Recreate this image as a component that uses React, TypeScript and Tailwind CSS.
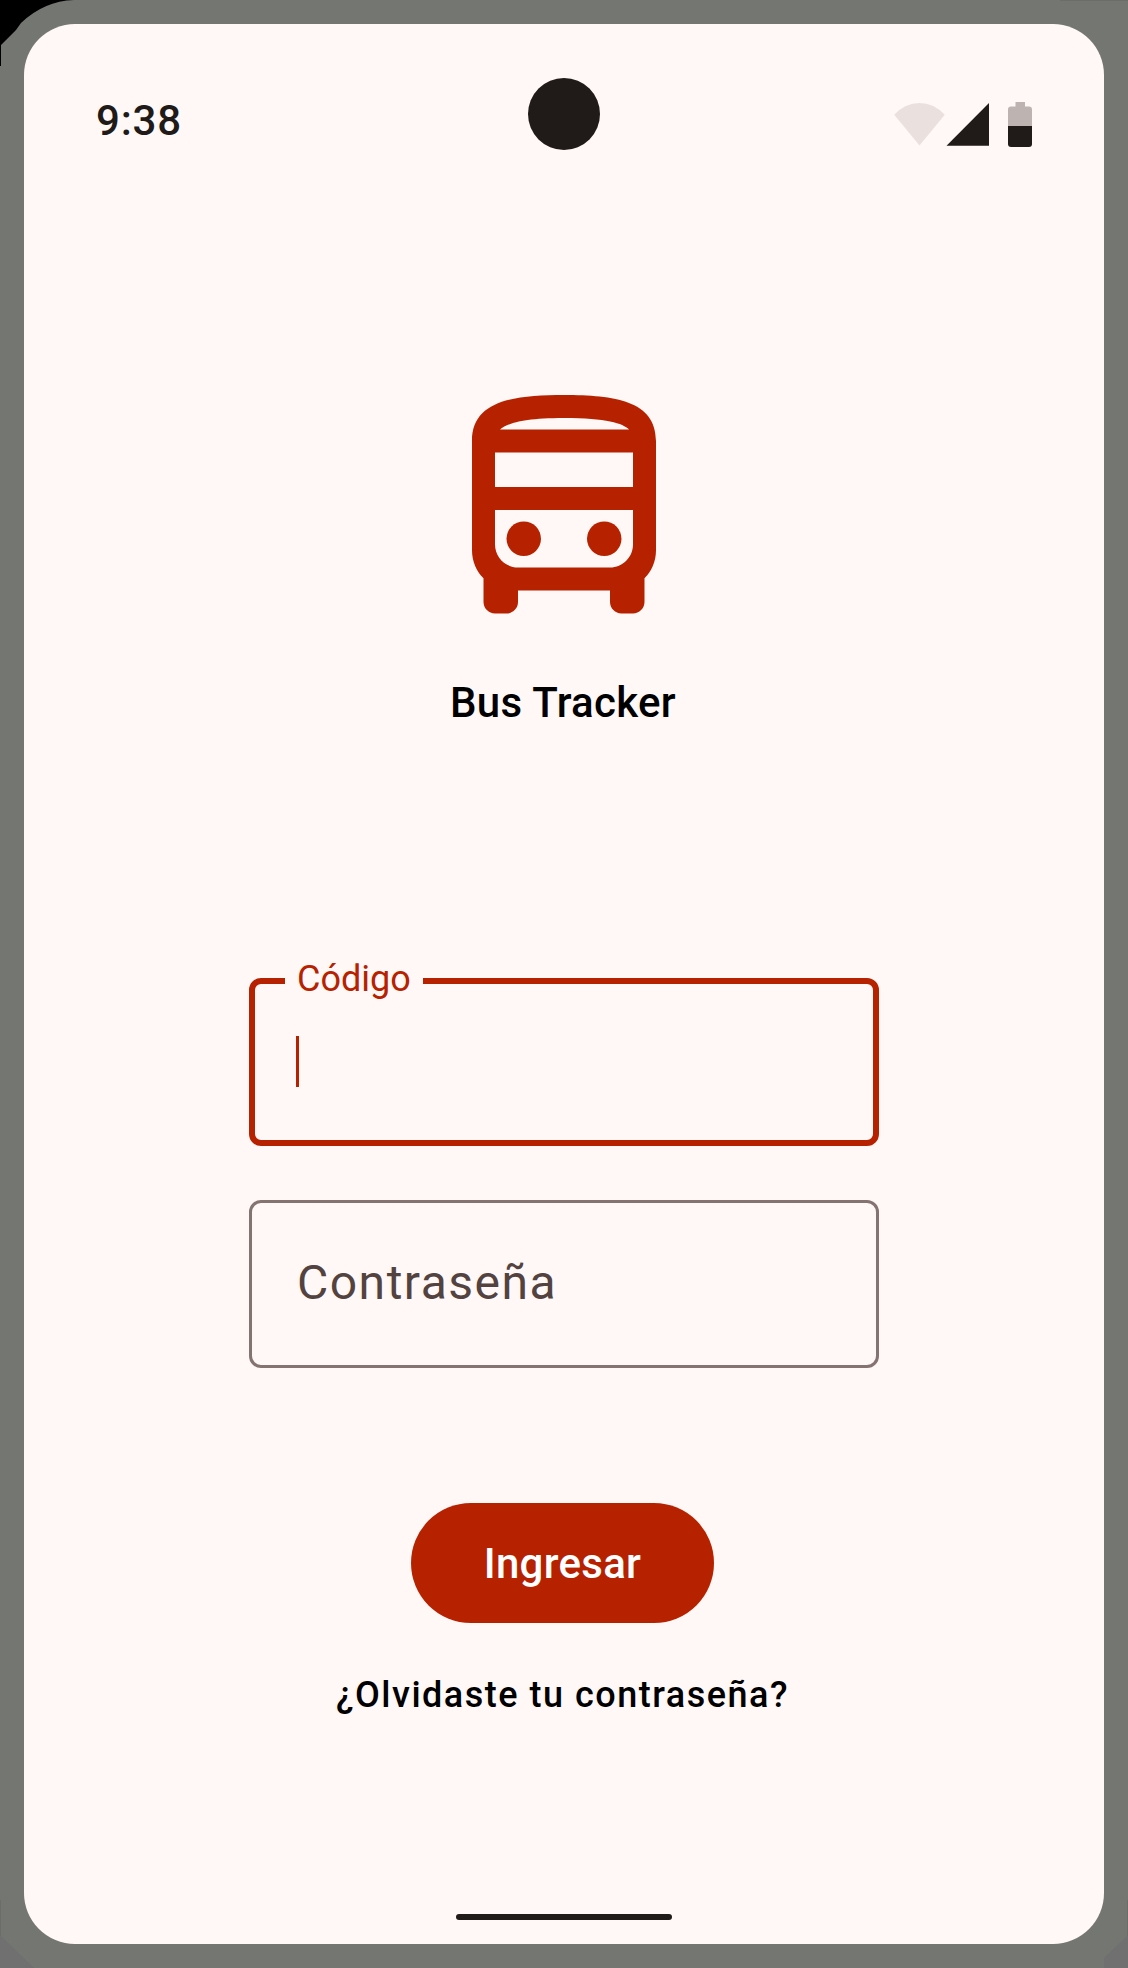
import React from 'react';

function StatusBar() {
  return (
    <header className="relative flex h-[192px] items-start justify-between pl-[72px] pr-[72px]">
      <span className="mt-[72px] text-[42px] font-medium leading-[49px] tracking-[0.8px] text-[#201a18]">9:38</span>
      <div className="absolute left-[504px] top-[54px] size-[72px] rounded-full bg-[#201a18]" />
      <svg className="mt-[76px] h-[50px] w-[140px]" viewBox="892 100 140 50">
        <path d="M894.2 114.8Q905 103 919.5 103Q934 103 944.8 114.8L919.5 145.6Z" fill="#eae1df" />
        <path d="M946.5 145.700L989 103V145.700Z" fill="#201a18" />
        <path d="M1015.5 102H1025V106.5H1029Q1032 106.500 1032 109.500V126H1008V109.500Q1008 106.500 1011 106.500H1015.500Z" fill="#bdb4b2" />
        <path d="M1008 126H1032V144Q1032 147 1029 147H1011Q1008 147 1008 144Z" fill="#201a18" />
      </svg>
    </header>
  );
}

function BusIcon() {
  return (
    <svg className="size-[276px]" viewBox="0 0 24 24" fill="#b62200">
      <path
        fillRule="evenodd"
        d="M12 2C7.580 2 4 2.500 4 6v9.500c0 .950.380 1.810 1 2.440V20c0 .550.450 1 1 1h1c.550 0 1-.450 1-1v-1h8v1c0 .550.450 1 1 1h1c.550 0 1-.450 1-1v-2.060c.620-.630 1-1.490 1-2.440V6c0-3.500-3.580-4-8-4zm5.660 3H6.430C7.120 4.480 8.310 4 12 4s5.110.460 5.660 1zM18 7v3H6V7zM6 12h12v3c0 1.100-.900 2-2 2H8c-1.100 0-2-.900-2-2z"
      />
      <circle cx="8.5" cy="14.5" r="1.5" />
      <circle cx="15.5" cy="14.5" r="1.5" />
    </svg>
  );
}

function FrameCorners() {
  return (
    <svg className="pointer-events-none absolute inset-0 h-[1968px] w-[1128px]" viewBox="0 0 1128 1968">
      <path d="M0 0H74Q44 1 21 23L16 30L1 45V66H0Z" fill="#000" />
      <path d="M0 1935L34 1968H0Z M1128 1935L1104 1958V1968H1128Z" fill="#707070" />
      <path d="M0 1900H1V1936H0Z M1127 1900H1128V1936H1127Z M1060 0H1128V1H1060Z" fill="#6b6d69" />
    </svg>
  );
}

export default function App() {
  return (
    <div className="relative h-[1968px] w-[1128px] overflow-hidden bg-[#747672] p-[24px] font-['Roboto',sans-serif]">
      <FrameCorners />
      <div className="relative flex h-[1920px] w-[1080px] flex-col overflow-hidden rounded-[51px] bg-[#fff8f6]">
        <StatusBar />
        <main className="flex flex-col items-center pt-[156px]">
          <BusIcon />
          <h1 className="mr-[2px] mt-[25px] text-[42px] font-medium leading-[60px] tracking-[0.3px] text-black">Bus Tracker</h1>

          <form className="mt-[245px] flex w-[630px] flex-col gap-[54px]">
            <div className="relative flex h-[168px] items-center rounded-[12px] border-[6px] border-[#b62200] pl-[40.500px]">
              <label className="absolute left-[30px] top-[-29px] h-[50px] w-[138px] bg-[#fff8f6] pl-[12px] text-[36px] leading-[48px] text-[#b62200]">
                Código
              </label>
              <span className="mb-[1px] h-[51px] w-[3px] bg-[#b62200]" />
            </div>
            <div className="flex h-[168px] items-center rounded-[12px] border-[3px] border-[#857370] pl-[45px]">
              <span className="mb-[2px] text-[48px] leading-[72px] tracking-[1.5px] text-[#534340]">Contraseña</span>
            </div>
          </form>

          <button className="mr-[3px] mt-[135px] h-[120px] w-[303px] rounded-full bg-[#b62200] pt-[2px] text-[42px] font-medium leading-[60px] tracking-[0.3px] text-white" type="button">
            Ingresar
          </button>
          <a className="mr-[3px] mt-[48px] text-[36px] font-medium leading-[48px] tracking-[1.5px] text-black">¿Olvidaste tu contraseña?</a>
        </main>
        <div className="mb-[24px] mt-auto h-[6px] w-[216px] self-center rounded-full bg-[#201a18]" />
      </div>
    </div>
  );
}
